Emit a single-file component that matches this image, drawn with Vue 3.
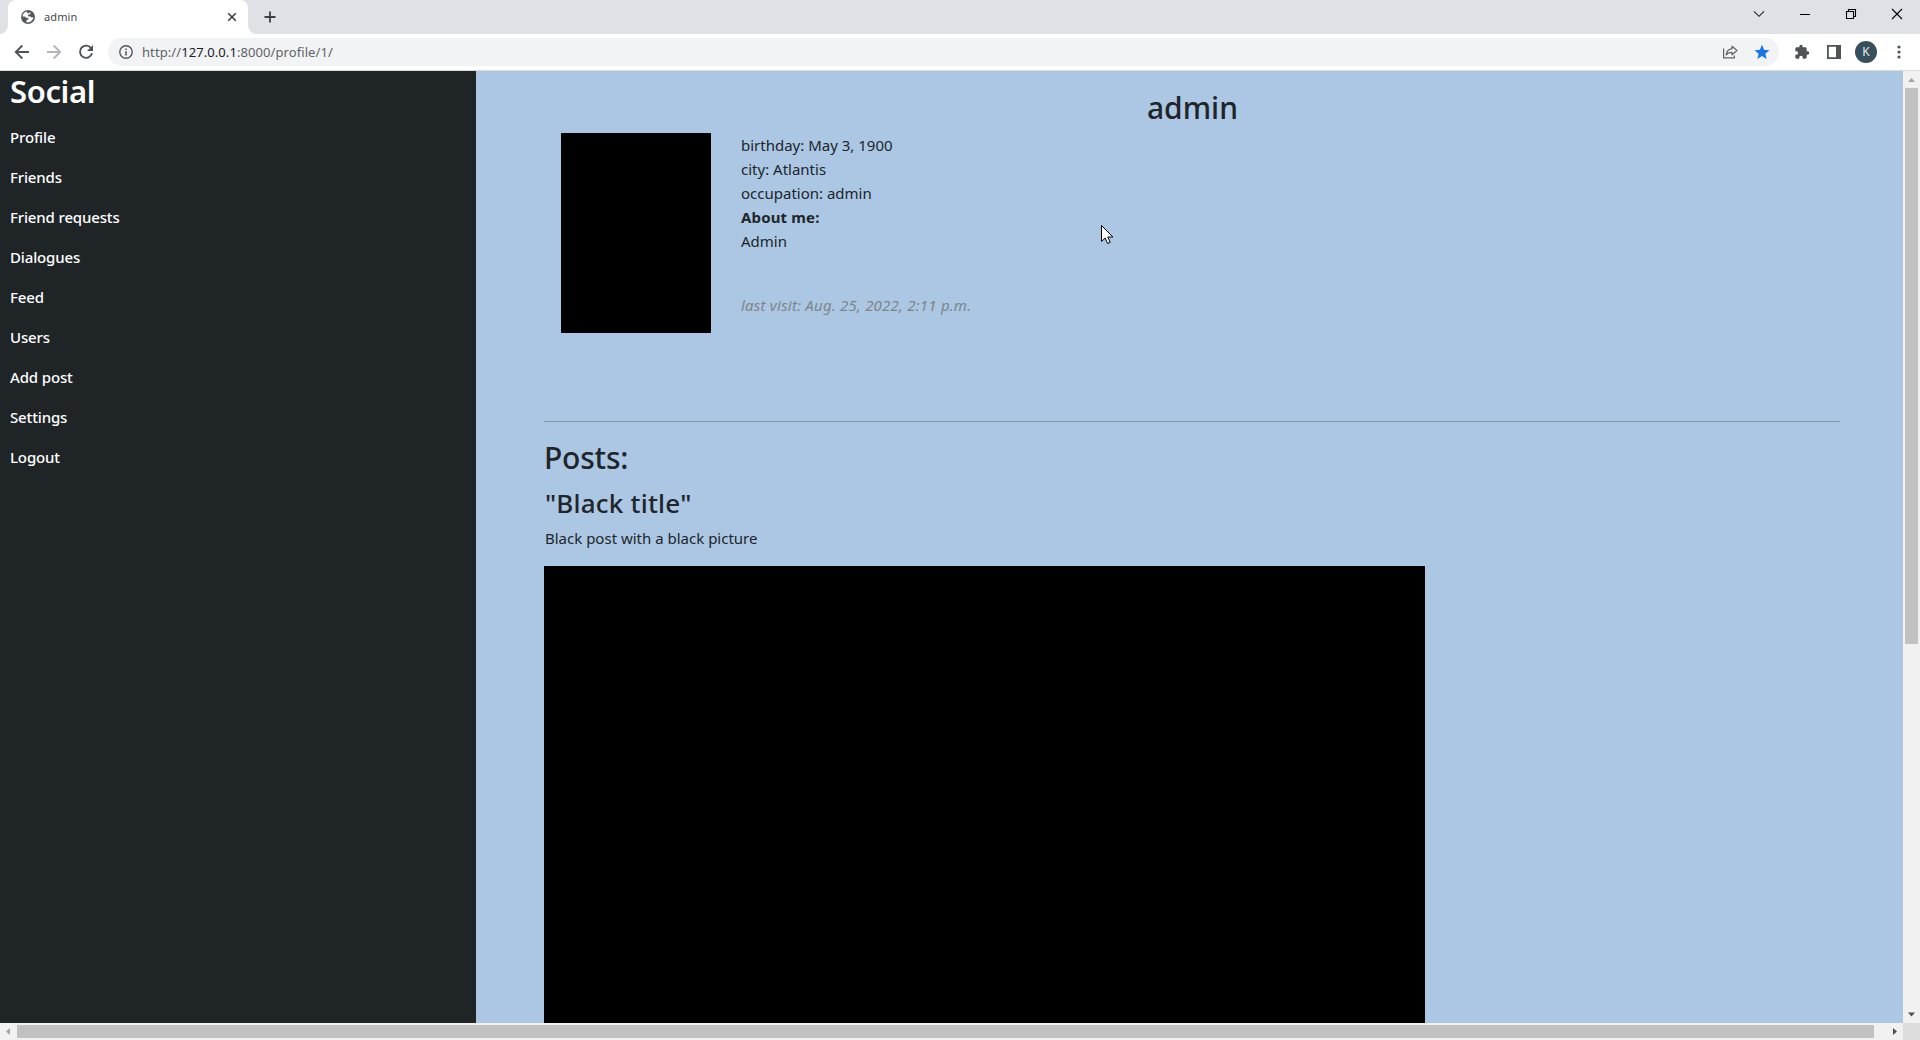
<script setup>
const links = ['Profile', 'Friends', 'Friend requests', 'Dialogues', 'Feed', 'Users', 'Add post', 'Settings', 'Logout']
</script>

<template>
  <div class="browser">
    <header class="tabstrip">
      <div class="tab">
        <svg class="globe" width="14" height="14" viewBox="0 0 14 14">
          <circle cx="7" cy="7" r="7" fill="#55595e" />
          <path d="M5.6 1.5C3.3 2 1.6 4 1.5 6.4l2.2.2 1.8 1.3 1.2-.2.9.9-.4 1-1.5.5-.4 2.2c3.700.7 6.900-1.800 7.200-5.200l-1.700.6-1.200-1.200-2 .1-.8-1 .8-1.200 1.700-.2V2.300L9 1.800l-.5 1.300-1.700.4z" fill="#fff" />
        </svg>
        <span class="tab-title">admin</span>
        <svg class="tab-close" width="10" height="10" viewBox="0 0 10 10"><path d="M1.200 1.200l7.600 7.600M8.800 1.200L1.200 8.800" stroke="#3c4043" stroke-width="1.600" /></svg>
      </div>
      <svg class="new-tab" width="12" height="12" viewBox="0 0 12 12"><path d="M6 .5v11M.5 6h11" stroke="#3c4043" stroke-width="1.800" /></svg>
      <div class="window-buttons">
        <svg width="12" height="12" viewBox="0 0 12 12"><path d="M1 3.300l5 5 5-5" fill="none" stroke="#222" stroke-width="1.100" /></svg>
        <svg width="12" height="12" viewBox="0 0 12 12"><path d="M1 6.500h10" stroke="#000" /></svg>
        <svg width="12" height="12" viewBox="0 0 12 12"><path d="M1.500 3.500h7v7h-7zM3.500 3.500v-2h7v7h-2" fill="none" stroke="#000" stroke-width="1.100" /></svg>
        <svg width="12" height="12" viewBox="0 0 12 12"><path d="M1 1l10 10M11 1L1 11" stroke="#000" stroke-width="1.100" /></svg>
      </div>
    </header>

    <div class="toolbar">
      <svg class="nav" width="16" height="16" viewBox="0 0 16 16"><path d="M15 8H2M8.300 1.500L1.800 8l6.500 6.500" fill="none" stroke="#505357" stroke-width="1.900" /></svg>
      <svg class="nav" width="16" height="16" viewBox="0 0 16 16"><path d="M1 8h13M7.700 1.500L14.200 8l-6.500 6.500" fill="none" stroke="#b4b6ba" stroke-width="1.900" /></svg>
      <svg class="nav" width="16" height="16" viewBox="0 0 16 16">
        <path d="M13.300 4.500A6.100 6.100 0 1 0 14 9.300" fill="none" stroke="#505357" stroke-width="1.900" />
        <path d="M15 1v6H9z" fill="#505357" />
      </svg>
      <div class="address">
        <svg width="14" height="14" viewBox="0 0 14 14">
          <circle cx="7" cy="7" r="6.200" fill="none" stroke="#55595e" stroke-width="1.400" />
          <path d="M7 6.200v4.300M7 3.500v1.500" stroke="#55595e" stroke-width="1.600" />
        </svg>
        <span class="url">http://<b>127.0.0.1</b>:8000/profile/1/</span>
        <svg class="share" width="16" height="16" viewBox="0 0 16 16">
          <path d="M1.600 4.500v9.400h10.800v-2.400" fill="none" stroke="#5f6368" stroke-width="1.200" />
          <path d="M10 2.200l5 4.300-5 4.300V8.400c-2.700 0-4.500.8-5.800 2.500.4-3.400 2.400-5.700 5.800-6.200z" fill="none" stroke="#5f6368" stroke-width="1.200" stroke-linejoin="round" />
        </svg>
        <svg class="star" width="16" height="16" viewBox="0 0 16 16"><path d="M8 .8l2.100 4.900 5.300.5-4 3.500 1.200 5.200L8 12.100l-4.600 2.800 1.200-5.200-4-3.500 5.300-.5z" fill="#1a73e8" /></svg>
      </div>
      <svg class="puzzle" width="16" height="16" viewBox="0 0 24 24"><path d="M20.500 11H19V7c0-1.100-.9-2-2-2h-4V3.500a2.500 2.500 0 0 0-5 0V5H4c-1.100 0-2 .9-2 2v3.800h1.500a2.700 2.700 0 0 1 0 5.400H2V20c0 1.100.9 2 2 2h3.800v-1.500a2.700 2.700 0 0 1 5.400 0V22H17c1.100 0 2-.9 2-2v-4h1.500a2.500 2.500 0 0 0 0-5z" fill="#505357" /></svg>
      <svg class="panel" width="14" height="14" viewBox="0 0 14 14"><path d="M0 0h14v14H0zM1.800 1.800v10.400H9V1.800z" fill="#505357" fill-rule="evenodd" /></svg>
      <span class="account">K</span>
      <svg class="menu" width="4" height="14" viewBox="0 0 4 14"><g fill="#505357"><circle cx="2" cy="2" r="1.600" /><circle cx="2" cy="7" r="1.600" /><circle cx="2" cy="12" r="1.600" /></g></svg>
    </div>

    <div class="viewport">
      <nav class="sidebar">
        <h2>Social</h2>
        <a v-for="l in links" :key="l">{{ l }}</a>
      </nav>
      <main>
        <h2 class="name">admin</h2>
        <section class="profile">
          <div class="photo"></div>
          <div class="facts">
            <div>birthday: May 3, 1900</div>
            <div>city: Atlantis</div>
            <div>occupation: admin</div>
            <div class="about">About me:</div>
            <div>Admin</div>
            <div class="visit">last visit: Aug. 25, 2022, 2:11 p.m.</div>
          </div>
        </section>
        <hr />
        <h2 class="posts">Posts:</h2>
        <h3>"Black title"</h3>
        <p>Black post with a black picture</p>
        <div class="picture"></div>
      </main>
      <div class="vbar">
        <svg width="17" height="17" viewBox="0 0 17 17"><path d="M5 11l3.500-4 3.500 4z" fill="#a3a3a3" /></svg>
        <div class="vthumb"></div>
        <svg class="down" width="17" height="17" viewBox="0 0 17 17"><path d="M5 6.500l3.500 4 3.500-4z" fill="#505050" /></svg>
      </div>
    </div>
    <div class="hbar">
      <svg width="17" height="17" viewBox="0 0 17 17"><path d="M10 5L6 8.500l4 3.500z" fill="#a3a3a3" /></svg>
      <div class="hthumb"></div>
      <svg class="right" width="17" height="17" viewBox="0 0 17 17"><path d="M7 5l4 3.500L7 12z" fill="#505050" /></svg>
      <div class="corner"></div>
    </div>

    <svg class="cursor" width="13" height="20" viewBox="0 0 13 20"><path d="M.5.500v16l3.700-3.500 2.400 5.500 2.600-1.100-2.400-5.400h5.100z" fill="#fff" stroke="#000" /></svg>
  </div>
</template>

<style>
body { margin: 0; overflow: hidden; }
</style>

<style scoped>
* { box-sizing: border-box; }
svg { display: block; flex: none; }
.browser {
  position: relative;
  display: flex;
  flex-direction: column;
  width: 1920px;
  height: 1040px;
  overflow: hidden;
  font-family: "Noto Sans", "Open Sans", sans-serif;
  font-size: 15px;
  line-height: 24px;
  color: #212529;
}

.tabstrip { display: flex; height: 34px; padding-left: 8px; background: #dee1e6; }
.tab {
  position: relative;
  display: flex;
  align-items: center;
  width: 240px;
  padding: 0 11px 0 13px;
  border-radius: 8px 8px 0 0;
  background: #fff;
}
.tab::before, .tab::after {
  content: "";
  position: absolute;
  bottom: 0;
  width: 8px;
  height: 8px;
}
.tab::before { left: -8px; background: radial-gradient(circle at 0 0, transparent 7.500px, #fff 8px); }
.tab::after { right: -8px; background: radial-gradient(circle at 100% 0, transparent 7.500px, #fff 8px); }
.tab-title { margin-left: 9px; font-size: 11px; letter-spacing: 0.1px; color: #45494d; }
.tab-close { margin-left: auto; }
.new-tab { margin: 11px 0 0 16px; }
.window-buttons { display: flex; gap: 34px; margin: 8px 17px 0 auto; }

.toolbar {
  display: flex;
  align-items: center;
  height: 37px;
  padding: 0 19px 0 14px;
  border-bottom: 1px solid #d9dbdf;
  background: #fff;
}
.nav { margin-right: 16px; }
.address {
  display: flex;
  align-items: center;
  width: 1671px;
  height: 28px;
  margin-left: -2px;
  padding: 0 9px 0 11px;
  border-radius: 14px;
  background: #f1f3f4;
}
.url { margin-left: 9px; font-size: 13px; letter-spacing: 0.08px; color: #5f6368; }
.url b { font-weight: 400; color: #202124; }
.share { margin-left: auto; }
.star { margin-left: 16px; }
.puzzle { margin-left: 15px; }
.panel { margin-left: 17px; }
.account {
  width: 22px;
  height: 22px;
  margin-left: 14px;
  border-radius: 50%;
  background: #37505c;
  color: #e4eaec;
  font-size: 12px;
  line-height: 22px;
  text-align: center;
}
.menu { margin-left: 20px; }

.viewport { display: flex; height: 952px; }
.sidebar { width: 476px; padding-left: 10px; background: #1f2427; color: #fff; }
.sidebar h2 { margin: 0 0 6px; font-size: 31px; font-weight: 600; line-height: 40px; letter-spacing: -0.4px; }
.sidebar a { display: block; font-weight: 480; line-height: 40px; letter-spacing: -0.15px; }

main { flex: 1; overflow: hidden; padding: 18px 63px 0 68px; background: #abc7e4; }
h2, h3 { margin: 0; font-weight: 500; }
.name { padding-left: 1px; font-size: 30px; line-height: 38px; text-align: center; }
.profile { display: flex; gap: 29px; height: 287px; padding: 6px 0 0 17px; }
.photo { width: 150px; height: 200px; background: #000; }
.facts { padding-left: 1px; }
.about { font-weight: 700; letter-spacing: 0.15px; }
.visit { margin-top: 40px; font-style: italic; letter-spacing: 0.22px; color: #808486; }
hr { height: 1px; margin: 7px 0 17px; border: 0; background: #8499a7; }
.posts { margin-bottom: 9px; font-size: 30px; line-height: 38px; letter-spacing: -0.2px; }
h3 { margin-bottom: 6px; padding-left: 1px; font-size: 26px; line-height: 34px; letter-spacing: 0.2px; }
p { margin: 0 0 16px; padding-left: 1px; }
.picture { width: 881px; height: 600px; background: #000; }

.vbar { display: flex; flex-direction: column; align-items: center; width: 17px; background: #f1f1f1; }
.vthumb { width: 13px; height: 556px; background: #c1c1c1; }
.down { margin-top: auto; }
.hbar { display: flex; align-items: center; height: 17px; background: #f1f1f1; }
.hthumb { width: 1857px; height: 13px; background: #c1c1c1; }
.right { margin-left: auto; }
.corner { width: 17px; height: 17px; background: #dcdcdc; }
.cursor { position: absolute; left: 1101px; top: 225px; }
</style>
